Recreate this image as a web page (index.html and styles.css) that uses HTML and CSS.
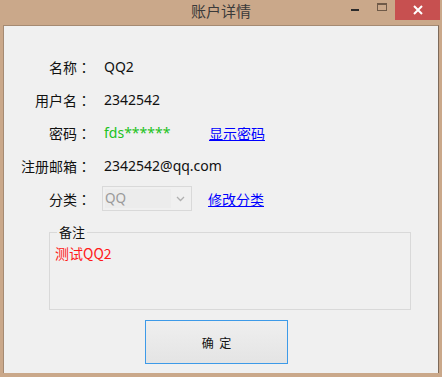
FILE: index.html
```html
<!DOCTYPE html>
<html>
<head>
<meta charset="utf-8">
<link rel="stylesheet" href="styles.css">
</head>
<body>
<div class="window">
  <div class="titlebar">
    <div class="title">账户详情</div>
    <div class="controls">
      <span class="btn-min"><span class="dash"></span></span>
      <span class="btn-max"><span class="box"></span></span>
      <span class="btn-close">
        <svg width="10" height="10" viewBox="0 0 10 10"><path d="M1 1L9 9M9 1L1 9" stroke="#fff" stroke-width="2"/></svg>
      </span>
    </div>
  </div>
  <div class="client">
    <div class="form">
      <div class="label">名称<span class="colon">：</span></div><div class="value">QQ2</div><div></div>
      <div class="label">用户名<span class="colon">：</span></div><div class="value">2342542</div><div></div>
      <div class="label">密码<span class="colon">：</span></div><div class="value green">fds******</div><div><a class="link" href="#">显示密码</a></div>
      <div class="label">注册邮箱<span class="colon">：</span></div><div class="value wide">2342542@qq.com</div>
      <div class="label">分类<span class="colon">：</span></div>
      <div class="value"><div class="combo"><span class="combo-text">QQ</span><svg class="chev" width="9" height="6" viewBox="0 0 9 6"><path d="M1 1L4.5 4.5L8 1" fill="none" stroke="#b0b0b0" stroke-width="1.3"/></svg></div></div>
      <div><a class="link link2" href="#">修改分类</a></div>
    </div>
    <fieldset class="group">
      <legend>备注</legend>
      <div class="note">测试QQ2</div>
    </fieldset>
    <div class="actions">
      <button class="ok">确&nbsp;&nbsp;定</button>
    </div>
  </div>
</div>
</body>
</html>
```
FILE: styles.css
```css
html, body {
  margin: 0;
  padding: 0;
}
body {
  width: 442px;
  height: 377px;
  background: #caa88a;
  font-family: "Noto Sans", "Noto Sans CJK SC", sans-serif;
  overflow: hidden;
}
.window {
  display: flex;
  flex-direction: column;
  height: 377px;
}
.titlebar {
  height: 25px;
  position: relative;
  display: flex;
  justify-content: center;
}
.title {
  font-family: "Noto Sans CJK SC", sans-serif;
  font-size: 15px;
  color: #3a3a3a;
  line-height: 22px;
}
.controls {
  position: absolute;
  right: 2px;
  top: 0;
  display: flex;
  align-items: flex-start;
}
.btn-min {
  width: 26px;
  height: 20px;
  display: flex;
  justify-content: center;
  align-items: center;
}
.dash {
  width: 8px;
  height: 2px;
  background: #2b2b2b;
}
.btn-max {
  width: 27px;
  height: 20px;
  display: flex;
  justify-content: center;
  padding-top: 3px;
  box-sizing: border-box;
}
.box {
  width: 8px;
  height: 5px;
  border: 1px solid #6f5a48;
  border-top-width: 2px;
}
.btn-close {
  width: 45px;
  height: 20px;
  background: #c75050;
  display: flex;
  justify-content: center;
  align-items: center;
}
.client {
  flex: 1;
  margin: 0 3px 4px 3px;
  background: #f0f0f0;
  border: 1px solid #a58a72;
  border-bottom: 0;
  border-right-color: #7d6a5a;
  display: flex;
  flex-direction: column;
}
.form {
  display: grid;
  grid-template-columns: 87px 92px auto;
  column-gap: 13px;
  grid-auto-rows: 33px;
  padding-top: 24px;
  align-items: center;
  font-family: "Noto Sans", "Noto Sans CJK SC", sans-serif;
  font-size: 14px;
  color: #111;
}
.label {
  text-align: right;
  font-family: "Noto Sans CJK SC", sans-serif;
  font-size: 14px;
}
.colon {
  font-family: "Noto Sans CJK JP", sans-serif;
}
.value {
  white-space: nowrap;
}
.wide {
  grid-column: 2 / 4;
}
.green {
  color: #21c221;
}
.link {
  color: #0000ff;
  font-family: "Noto Sans CJK SC", sans-serif;
  font-size: 14px;
  text-decoration: underline;
}
.link2 {
  margin-left: -1px;
}
.combo {
  margin-left: -2px;
  width: 88px;
  height: 23px;
  border: 1px solid #d9d9d9;
  background: #f0f0f0;
  display: flex;
  align-items: center;
  justify-content: space-between;
}
.combo-text {
  margin-left: 2px;
  width: 66px;
  height: 19px;
  background: #ececec;
  color: #9a9a9a;
  font-size: 13.5px;
  line-height: 19px;
}
.chev {
  margin-right: 6px;
}
.group {
  margin: 10px 0 0 45px;
  width: 348px;
  height: 75px;
  border: 1px solid #d9d9d9;
  padding: 4px 6px;
}
.group legend {
  font-family: "Noto Sans CJK SC", sans-serif;
  font-size: 13px;
  color: #111;
  padding: 0 2px;
  margin-left: 1px;
  line-height: 14px;
}
.note {
  color: #ff1a1a;
  font-family: "Noto Sans CJK SC", sans-serif;
  font-size: 14px;
  margin-left: -1px;
}
.actions {
  padding: 10px 0 0 141px;
}
.ok {
  width: 143px;
  height: 44px;
  border: 1px solid #3d9ae8;
  background: linear-gradient(#efefef, #e4e4e4);
  font-family: "Noto Sans CJK SC", sans-serif;
  font-size: 12px;
  color: #111;
  padding: 0;
}
```
